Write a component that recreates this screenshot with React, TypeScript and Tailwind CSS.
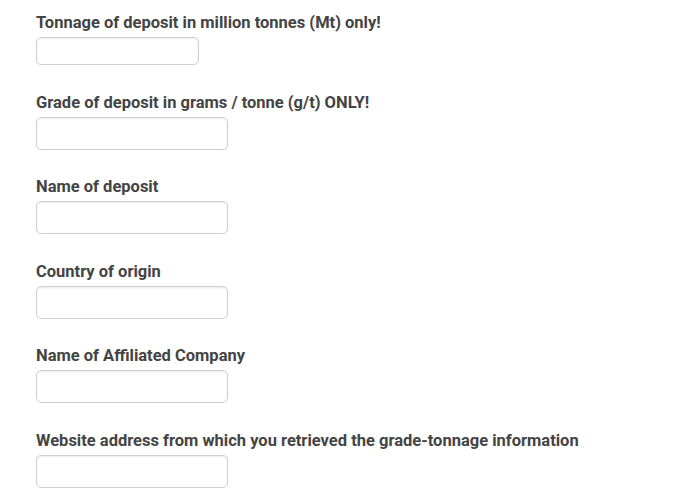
const fields = [
  { label: "Tonnage of deposit in million tonnes (Mt) only!", small: true },
  { label: "Grade of deposit in grams / tonne (g/t) ONLY!" },
  { label: "Name of deposit" },
  { label: "Country of origin" },
  { label: "Name of Affiliated Company" },
  { label: "Website address from which you retrieved the grade-tonnage information" },
];

export default function App() {
  return (
    <div
      className="w-[700px] h-[491px] overflow-hidden bg-white pl-[36px] pt-[13px]"
      style={{ fontFamily: "Roboto, 'Noto Sans', sans-serif" }}
    >
      {fields.map((f, i) => (
        <div key={i} className="mb-[27.5px]">
          <p className="text-[16.5px] leading-[20px] font-bold text-[#444444]">{f.label}</p>
          <input
            type="text"
            className={
              f.small
                ? "mt-[4px] block w-[163px] h-[28px] rounded-[5px] border border-[#cfcfcf] bg-white shadow-[inset_0_1px_2px_rgba(0,0,0,0.08)] outline-none"
                : "mt-[4px] block w-[192px] h-[33px] rounded-[5px] border border-[#cfcfcf] bg-white shadow-[inset_0_1px_2px_rgba(0,0,0,0.08)] outline-none"
            }
          />
        </div>
      ))}
    </div>
  );
}
